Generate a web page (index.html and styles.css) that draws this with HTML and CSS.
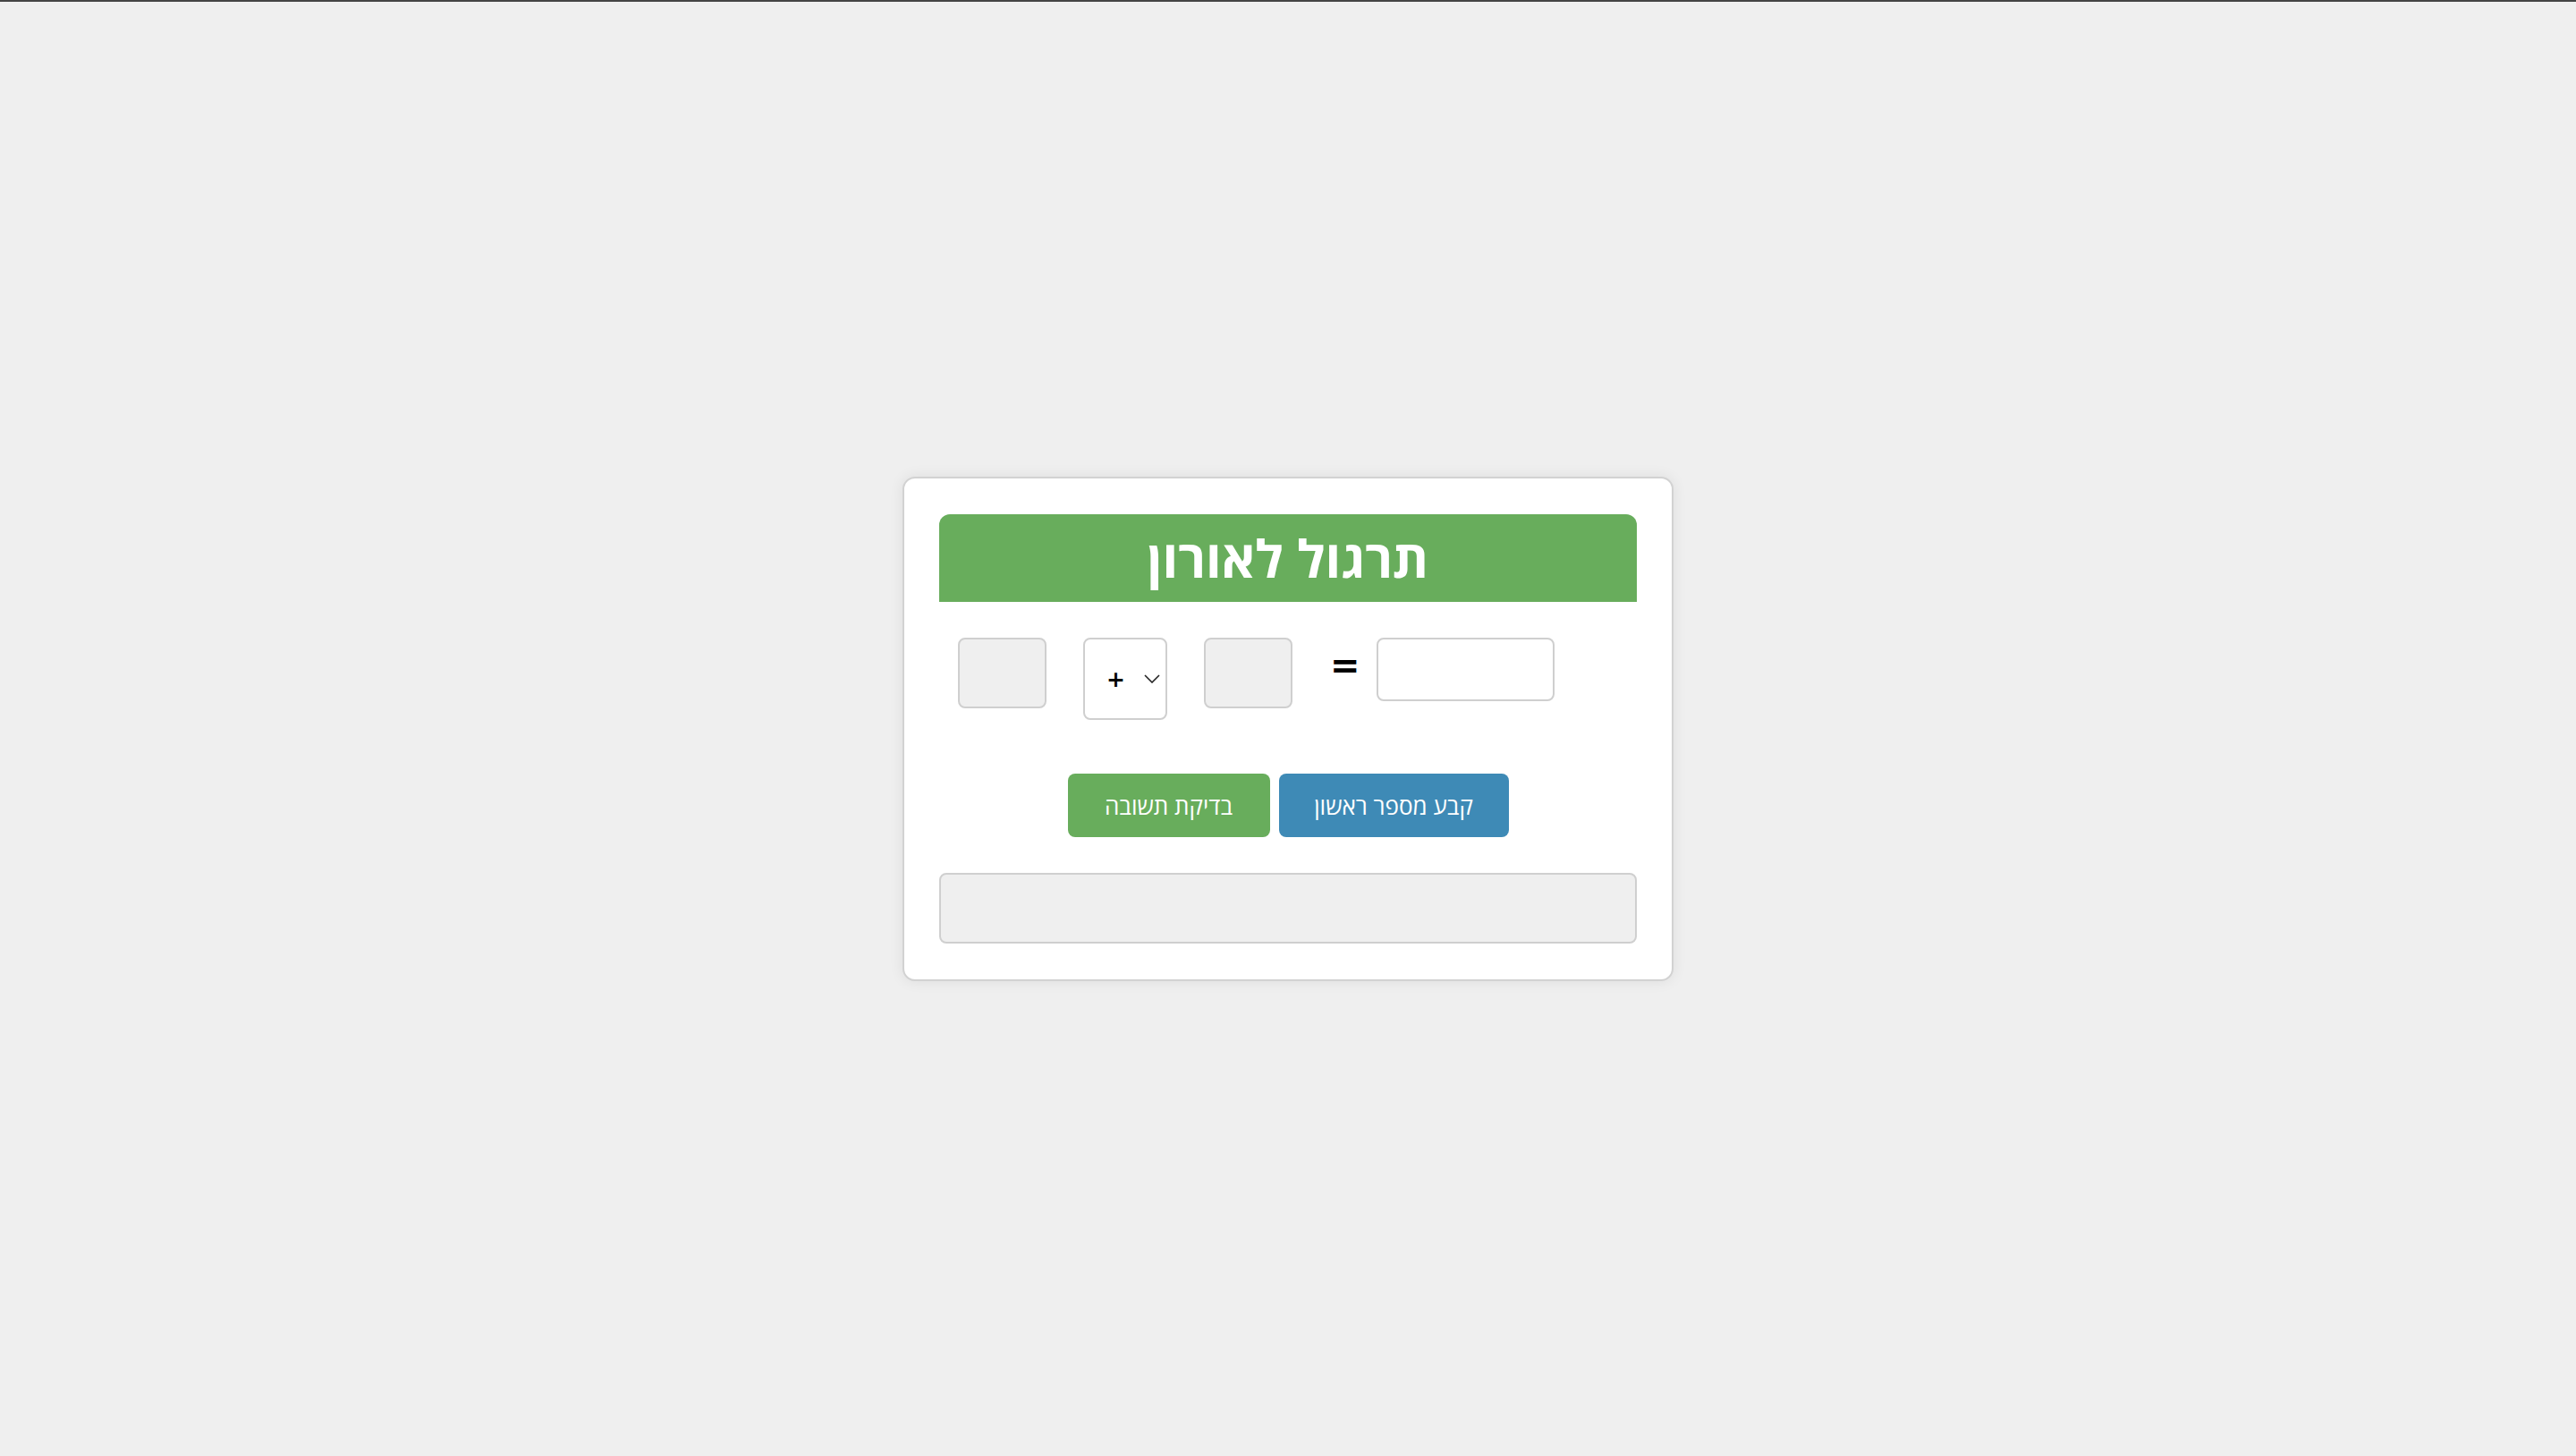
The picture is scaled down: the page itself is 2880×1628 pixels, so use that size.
FILE: index.html
```html
<!DOCTYPE html>
<html lang="he">
<head>
<meta charset="utf-8">
<title>תרגול לאורון</title>
<link rel="stylesheet" href="styles.css">
</head>
<body>
<main class="card" dir="rtl">
  <h1 class="title">תרגול לאורון</h1>
  <div class="equation" dir="ltr">
    <input class="field num" type="text" readonly>
    <div class="field op">
      <span class="op-sign">+</span>
      <svg class="chevron" width="18" height="10" viewBox="0 0 18 10"><path d="M1 1 L9 9 L17 1" fill="none" stroke="#222" stroke-width="1.6"/></svg>
    </div>
    <input class="field num" type="text" readonly>
    <span class="eq">=</span>
    <input class="field answer" type="text">
  </div>
  <div class="actions">
    <button class="btn btn-blue" type="button">קבע מספר ראשון</button>
    <button class="btn btn-green" type="button">בדיקת תשובה</button>
  </div>
  <div class="result"></div>
</main>
</body>
</html>
```

FILE: styles.css
```css
html {
  border-top: 2px solid #444;
}
body {
  margin: 0;
  min-height: calc(100vh - 2px);
  background: #efefef;
  font-family: "Open Sans", "Liberation Sans", Arial, sans-serif;
  display: flex;
  align-items: center;
  justify-content: center;
}
.card {
  box-sizing: border-box;
  width: 862px;
  background: #fff;
  border: 2px solid #d2d2d2;
  border-radius: 14px;
  padding: 40px 39px;
  box-shadow: 0 0 16px rgba(0, 0, 0, 0.08);
}
.title {
  box-sizing: border-box;
  margin: 0;
  height: 98px;
  padding-bottom: 1px;
  background: #68ad5c;
  color: #fff;
  border-radius: 12px 12px 0 0;
  display: flex;
  align-items: center;
  justify-content: center;
  font-family: "Open Sans", "Liberation Sans", sans-serif;
  font-size: 58px;
  font-weight: bold;
  line-height: normal;
}
.equation {
  display: flex;
  align-items: flex-start;
  margin-top: 40px;
  padding-left: 21px;
}
.field {
  box-sizing: border-box;
  border: 2px solid #cfcfcf;
  border-radius: 8px;
  background: #fff;
  font-family: "Liberation Sans", Arial, sans-serif;
  font-size: 24px;
  margin: 0;
  padding: 0;
}
.num {
  width: 99px;
  height: 79px;
  background: #efefef;
}
.op {
  width: 94px;
  height: 92px;
  margin: 0 41px;
  display: flex;
  align-items: center;
  justify-content: space-between;
  padding-left: 24px;
  padding-right: 6px;
}
.op-sign {
  font-family: "DejaVu Sans", sans-serif;
  font-weight: bold;
  font-size: 25px;
  color: #000;
  line-height: 1;
}
.chevron {
  display: block;
}
.eq {
  font-family: "DejaVu Sans", sans-serif;
  font-weight: bold;
  font-size: 40px;
  line-height: 1;
  margin-top: 11px;
  margin-left: 42px;
  margin-right: 18px;
  color: #000;
}
.answer {
  width: 199px;
  height: 71px;
}
.actions {
  display: flex;
  justify-content: center;
  gap: 10px;
  margin-top: 60px;
}
.btn {
  height: 71px;
  border: none;
  border-radius: 8px;
  color: #fff;
  font-family: "Open Sans", "Liberation Sans", sans-serif;
  font-size: 26px;
  padding: 0;
  cursor: pointer;
}
.btn-blue {
  background: #3e8ab6;
  width: 257px;
}
.btn-green {
  background: #68ad5c;
  width: 226px;
}
.result {
  box-sizing: border-box;
  margin-top: 40px;
  height: 79px;
  background: #efefef;
  border: 2px solid #cfcfcf;
  border-radius: 8px;
}
```
